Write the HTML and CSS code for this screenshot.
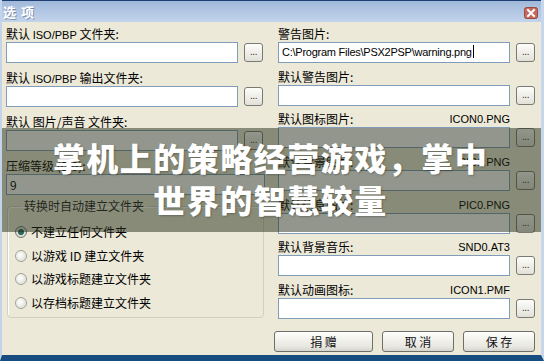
FILE: index.html
```html
<!DOCTYPE html>
<html lang="zh-CN">

<head>
    <meta charset="utf-8">
    <link rel="stylesheet" href="styles.css">
</head>

<body>
    <div class="window">
        <div class="titlebar">
            <span class="title">选&nbsp;项</span>
            <span class="close">
                <svg width="14" height="12" viewBox="0 0 14 12">
                    <rect x="0.5" y="0.5" width="13" height="11" rx="2" fill="#c5695c" stroke="#9a4a40"/>
                    <path d="M4 3 L10 9 M10 3 L4 9" stroke="#fff" stroke-width="2" stroke-linecap="square"/>
                </svg>
            </span>
        </div>

        <div class="content">
            <div class="col left">
                <div class="field">
                    <div class="label">默认 <span class="en">ISO/PBP</span> 文件夹:</div>
                    <div class="row"><div class="input"></div><button class="browse">...</button></div>
                </div>
                <div class="field">
                    <div class="label">默认 <span class="en">ISO/PBP</span> 输出文件夹:</div>
                    <div class="row"><div class="input"></div><button class="browse">...</button></div>
                </div>
                <div class="field">
                    <div class="label">默认 图片/声音 文件夹:</div>
                    <div class="row"><div class="input"></div><button class="browse">...</button></div>
                </div>
                <div class="field level">
                    <div class="label">压缩等级 (0-9):</div>
                    <div class="row"><div class="input wide">9</div></div>
                </div>
                <fieldset class="group">
                    <legend>转换时自动建立文件夹</legend>
                    <div class="radio on"><span class="dot"></span>不建立任何文件夹</div>
                    <div class="radio"><span class="dot"></span>以游戏 ID 建立文件夹</div>
                    <div class="radio"><span class="dot"></span>以游戏标题建立文件夹</div>
                    <div class="radio"><span class="dot"></span>以存档标题建立文件夹</div>
                </fieldset>
            </div>

            <div class="col right">
                <div class="field">
                    <div class="label">警告图片:</div>
                    <div class="row"><div class="input path">C:\Program Files\PSX2PSP\warning.png<span class="caret"></span></div><button class="browse">...</button></div>
                </div>
                <div class="field">
                    <div class="label">默认警告图片:</div>
                    <div class="row"><div class="input"></div><button class="browse">...</button></div>
                </div>
                <div class="field">
                    <div class="label">默认图标图片: <span class="file">ICON0.PNG</span></div>
                    <div class="row"><div class="input"></div><button class="browse">...</button></div>
                </div>
                <div class="field">
                    <div class="label">默认背景图片: <span class="file">PIC1.PNG</span></div>
                    <div class="row"><div class="input"></div><button class="browse">...</button></div>
                </div>
                <div class="field">
                    <div class="label">默认信息图片: <span class="file">PIC0.PNG</span></div>
                    <div class="row"><div class="input"></div><button class="browse">...</button></div>
                </div>
                <div class="field">
                    <div class="label">默认背景音乐: <span class="file">SND0.AT3</span></div>
                    <div class="row"><div class="input"></div><button class="browse">...</button></div>
                </div>
                <div class="field">
                    <div class="label">默认动画图标: <span class="file">ICON1.PMF</span></div>
                    <div class="row"><div class="input"></div><button class="browse">...</button></div>
                </div>
            </div>

            <div class="actions">
                <button class="btn donate">捐 赠</button>
                <button class="btn">取 消</button>
                <button class="btn">保 存</button>
            </div>
        </div>

        <div class="banner">掌机上的策略经营游戏，掌中世界的智慧较量</div>
    </div>
</body>

</html>
```

FILE: styles.css
```css
* {
    box-sizing: border-box;
}

html,
body {
    margin: 0;
    padding: 0;
}

body {
    font-family: "Noto Sans CJK SC", "Liberation Sans", sans-serif;
    font-size: 12px;
    color: #000;
    background: #ece9d8;
}

.window {
    position: relative;
    width: 544px;
    height: 361px;
    background: #ece9d8;
    border-left: 2px solid #c3d4ea;
    border-right: 3px solid #c6d6ec;
    border-bottom: 6px solid #174c81;
    overflow: hidden;
}

/* title bar */
.titlebar {
    height: 22px;
    border-top: 1px solid #1d3f73;
    background: linear-gradient(#a0b9da, #c3d4eb);
    display: flex;
    align-items: center;
    justify-content: space-between;
    padding: 0 3px 0 1px;
}

.title {
    color: #fff;
    font-weight: bold;
    font-size: 13px;
    line-height: 16px;
    word-spacing: 2px;
    text-shadow: 1px 1px 0 rgba(50, 70, 110, .45);
}

.close {
    display: flex;
    margin-top: 2px;
}

/* form */
.content {
    display: grid;
    grid-template-columns: 259px 257px;
    column-gap: 13px;
    padding: 4px 0 0 4px;
}

.col {
    display: flex;
    flex-direction: column;
}

.field {
    margin-bottom: 7px;
}

.right .field {
    margin-bottom: 5.67px;
}

.right .field:last-child,
.left .level {
    margin-bottom: 3px;
}

.label {
    height: 16px;
    line-height: 16px;
    white-space: nowrap;
    display: flex;
    justify-content: space-between;
    width: 232px;
}

.left .label {
    display: block;
}

.en,
.file,
.path {
    font-family: "Liberation Sans", sans-serif;
    font-size: 11px;
}

.path {
    letter-spacing: -0.25px;
}

.row {
    display: flex;
    align-items: center;
    gap: 6px;
    height: 21px;
}

.input {
    width: 232px;
    height: 21px;
    background: #fff;
    border: 1px solid #7f9db9;
    padding: 0 3px;
    line-height: 19px;
    white-space: nowrap;
    overflow: hidden;
}

.input.wide {
    width: 259px;
}

.caret {
    display: inline-block;
    width: 1px;
    height: 13px;
    margin-left: 1px;
    background: #000;
    vertical-align: -2px;
}

.browse {
    width: 19px;
    height: 19px;
    padding: 0 0 4px;
    border: 1px solid #7a7a74;
    border-radius: 3px;
    background: linear-gradient(#fdfdfb, #e2e1d8);
    font: 10px "Liberation Sans", sans-serif;
    color: #333;
    line-height: 10px;
    letter-spacing: -0.5px;
    display: flex;
    align-items: flex-end;
    justify-content: center;
}

/* group box */
.group {
    margin: 0 0 0 1px;
    width: 257px;
    height: 120px;
    padding: 10px 7px 0;
    border: 1px solid #d0d0bf;
    border-radius: 4px;
    box-shadow: inset 1px 1px 0 #fff;
}

.group legend {
    margin-left: 6px;
    padding: 0 3px;
    line-height: 16px;
    color: #1e1e1e;
}

.radio {
    display: flex;
    align-items: center;
    gap: 4px;
    height: 16px;
    line-height: 16px;
    margin-bottom: 7.7px;
}

.dot {
    width: 12px;
    height: 12px;
    border-radius: 50%;
    border: 1px solid #a2a396;
    background: radial-gradient(circle at 40% 40%, #fff, #d7d7cd);
}

.radio.on .dot {
    border-color: #6f7a73;
    background: radial-gradient(circle, #2f6658 0 2.6px, #dfe3dc 3.6px, #c9ccc2 100%);
}

/* bottom buttons */
.actions {
    grid-column: 1 / -1;
    display: flex;
    justify-content: flex-end;
    gap: 9px;
    margin-top: 9px;
}

.btn {
    width: 72px;
    height: 21px;
    padding: 0;
    border: 1px solid #6f6f6a;
    border-radius: 3px;
    background: linear-gradient(#fefefd, #e6e5de 80%, #d6d5cc);
    font: 12px "Noto Sans CJK SC", sans-serif;
    line-height: 19px;
    color: #111;
}

.btn.donate {
    width: 99px;
}

/* overlay */
.banner {
    position: absolute;
    top: 128px;
    left: -2px;
    right: 0;
    height: 104px;
    padding: 8px 50px 0;
    background: rgba(38, 45, 25, .5);
    color: #fff;
    font-family: "Noto Sans CJK SC", sans-serif;
    font-size: 32px;
    font-weight: 900;
    line-height: 42px;
    letter-spacing: 1.5px;
    text-align: center;
    text-shadow: 1px 1px 2px rgba(0, 0, 0, .25);
}
```
